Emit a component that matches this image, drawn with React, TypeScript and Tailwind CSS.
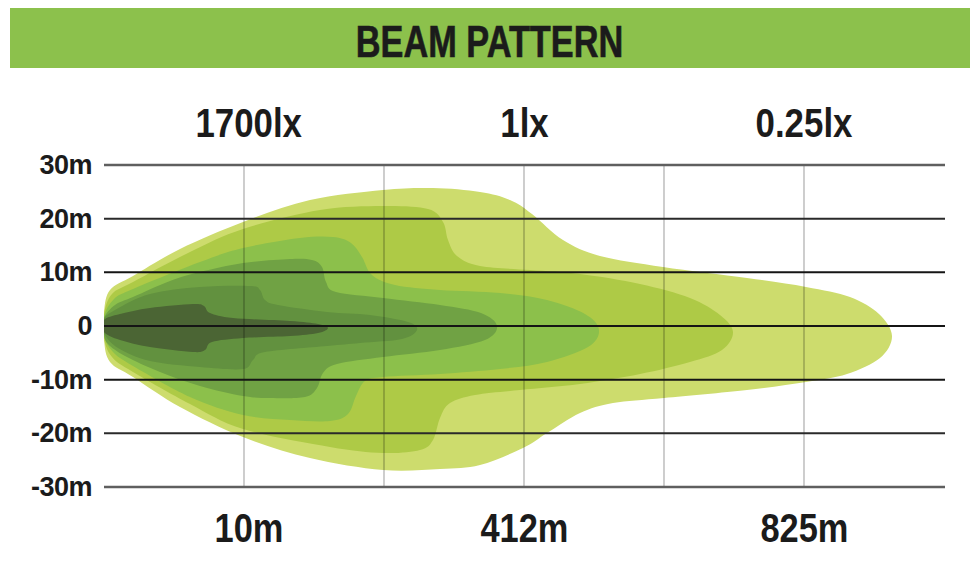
import React from "react";

type Pt = [number, number];

// closed Catmull-Rom curve through the points, as cubic beziers
const smooth = (pts: Pt[]) => {
  const n = pts.length;
  let d = `M${pts[0][0]},${pts[0][1]}`;
  for (let i = 0; i < n; i++) {
    const p0 = pts[(i - 1 + n) % n];
    const p1 = pts[i];
    const p2 = pts[(i + 1) % n];
    const p3 = pts[(i + 2) % n];
    const c1x = p1[0] + (p2[0] - p0[0]) / 6;
    const c1y = p1[1] + (p2[1] - p0[1]) / 6;
    const c2x = p2[0] - (p3[0] - p1[0]) / 6;
    const c2y = p2[1] - (p3[1] - p1[1]) / 6;
    d += ` C${c1x.toFixed(1)},${c1y.toFixed(1)} ${c2x.toFixed(1)},${c2y.toFixed(1)} ${p2[0]},${p2[1]}`;
  }
  return d + "Z";
};

const layers: { color: string; pts: Pt[] }[] = [
  {
    color: "#cddc6d",
    pts: [
      [104, 312], [110, 290], [133, 276], [180, 249], [243, 222], [310, 200], [383, 190],
      [433, 188], [480, 192], [510, 200], [532, 214], [563, 240], [600, 256], [663, 267],
      [747, 278], [806, 287], [850, 297], [879, 314], [892, 336], [880, 358], [847, 374],
      [806, 382], [747, 390], [664, 398], [613, 403], [580, 413], [547, 433], [523, 448],
      [480, 465], [440, 469], [383, 470], [310, 458], [243, 437], [180, 407], [133, 377],
      [110, 362], [104, 340],
    ],
  },
  {
    color: "#aeca46",
    pts: [
      [104, 314], [112, 294], [133, 282], [190, 252], [243, 229], [320, 210], [383, 206],
      [428, 209], [443, 222], [448, 240], [457, 256], [480, 266], [530, 270], [580, 274],
      [640, 284], [690, 298], [720, 315], [733, 332], [722, 350], [690, 362], [640, 374],
      [580, 384], [520, 390], [475, 395], [450, 403], [440, 418], [433, 440], [420, 450],
      [383, 453], [330, 447], [243, 429], [190, 404], [133, 372], [112, 357], [104, 338],
    ],
  },
  {
    color: "#8cc04b",
    pts: [
      [104, 316], [114, 299], [133, 289], [200, 262], [243, 248], [300, 238], [333, 237],
      [351, 243], [362, 257], [372, 275], [395, 285], [440, 290], [500, 293], [547, 300],
      [585, 314], [599, 330], [588, 347], [547, 362], [500, 369], [440, 374], [383, 377],
      [365, 381], [356, 396], [348, 414], [330, 421], [290, 420], [243, 415], [190, 397],
      [133, 366], [113, 352], [104, 336],
    ],
  },
  {
    color: "#70a244",
    pts: [
      [104, 318], [115, 305], [133, 297], [170, 281], [200, 272], [243, 263], [290, 259],
      [312, 260], [322, 267], [326, 282], [336, 292], [383, 298], [440, 305], [481, 313],
      [497, 326], [485, 340], [440, 350], [383, 357], [337, 364], [323, 373], [317, 388],
      [305, 397], [270, 398], [243, 396], [200, 386], [160, 372], [125, 356], [108, 344],
      [104, 334],
    ],
  },
  {
    color: "#62913f",
    pts: [
      [104, 319], [115, 310], [150, 294], [200, 287], [250, 286], [260, 290], [265, 300],
      [278, 305], [327, 312], [370, 315], [408, 322], [417, 330], [402, 339], [360, 343],
      [327, 346], [265, 352], [253, 360], [243, 369], [200, 367], [150, 361], [118, 348],
      [104, 333],
    ],
  },
  {
    color: "#4b6534",
    pts: [
      [104, 320], [120, 314], [150, 308], [193, 304], [204, 306], [210, 313], [233, 318],
      [290, 321], [318, 324], [328, 328], [318, 333], [290, 336], [243, 338], [212, 342],
      [205, 350], [193, 352], [150, 347], [120, 340], [104, 332],
    ],
  },
];

const rowsY = [0, 1, 2, 3, 4, 5, 6].map((k) => 165 + k * 53.67);
const colsX = [244, 384, 524, 664, 804];
const yLabels = ["30m", "20m", "10m", "0", "-10m", "-20m", "-30m"];

const font = { fontFamily: '"Liberation Sans", Arial, Helvetica, sans-serif' };

const BeamChart = () => (
  <svg width={845} height={346} viewBox="104 153 845 346" className="block">
    <defs>
      <clipPath id="plot">
        <rect x={104} y={153} width={845} height={346} />
      </clipPath>
    </defs>
    <g clipPath="url(#plot)">
      {layers.map((l, i) => (
        <path key={i} d={smooth(l.pts)} fill={l.color} />
      ))}
    </g>
    {colsX.map((x) => (
      <line key={x} x1={x} y1={165} x2={x} y2={487} stroke="#000" strokeOpacity={0.3} strokeWidth={1.3} />
    ))}
    {rowsY.map((y, i) => {
      const edge = i === 0 || i === 6;
      const mid = i === 1 || i === 5;
      return (
        <line
          key={i}
          x1={104}
          y1={y}
          x2={945}
          y2={y}
          stroke={edge ? "#5f5f5f" : mid ? "#2a2a2a" : "#151515"}
          strokeWidth={edge ? 2.6 : 2}
        />
      );
    })}
  </svg>
);

export default function App() {
  return (
    <div className="w-[980px] h-[570px] bg-white overflow-hidden text-[#1b1b1b]" style={font}>
      <div className="mx-[10px] mt-[8px] h-[60px] bg-[#8cc14c] flex justify-center pt-[12px]">
        <span className="inline-block text-[44px] leading-[44px] font-bold scale-x-[0.78] [-webkit-text-stroke:0.6px_#1b1b1b]">
          BEAM PATTERN
        </span>
      </div>

      <div className="ml-[104px] mt-[35px] w-[840px] grid grid-cols-3 text-center">
        {["1700lx", "1lx", "0.25lx"].map((t, i) => (
          <div key={t} className={i === 0 ? "pl-[10px]" : ""}>
            <span className="inline-block text-[41px] leading-[41px] font-bold scale-x-[0.85]">{t}</span>
          </div>
        ))}
      </div>

      <div className="mt-[9px] flex">
        <div className="w-[104px] h-[346px] pr-[12px] flex flex-col justify-between items-end">
          {yLabels.map((t) => (
            <div key={t} className="h-[24px] text-[27px] leading-[24px] font-bold tracking-[-0.5px]">
              {t}
            </div>
          ))}
        </div>
        <BeamChart />
      </div>

      <div className="ml-[104px] mt-[9px] w-[840px] grid grid-cols-3 text-center">
        {["10m", "412m", "825m"].map((t, i) => (
          <div key={t} className={i === 0 ? "pl-[10px]" : ""}>
            <span className="inline-block text-[41px] leading-[41px] font-bold scale-x-[0.84]">{t}</span>
          </div>
        ))}
      </div>
    </div>
  );
}
